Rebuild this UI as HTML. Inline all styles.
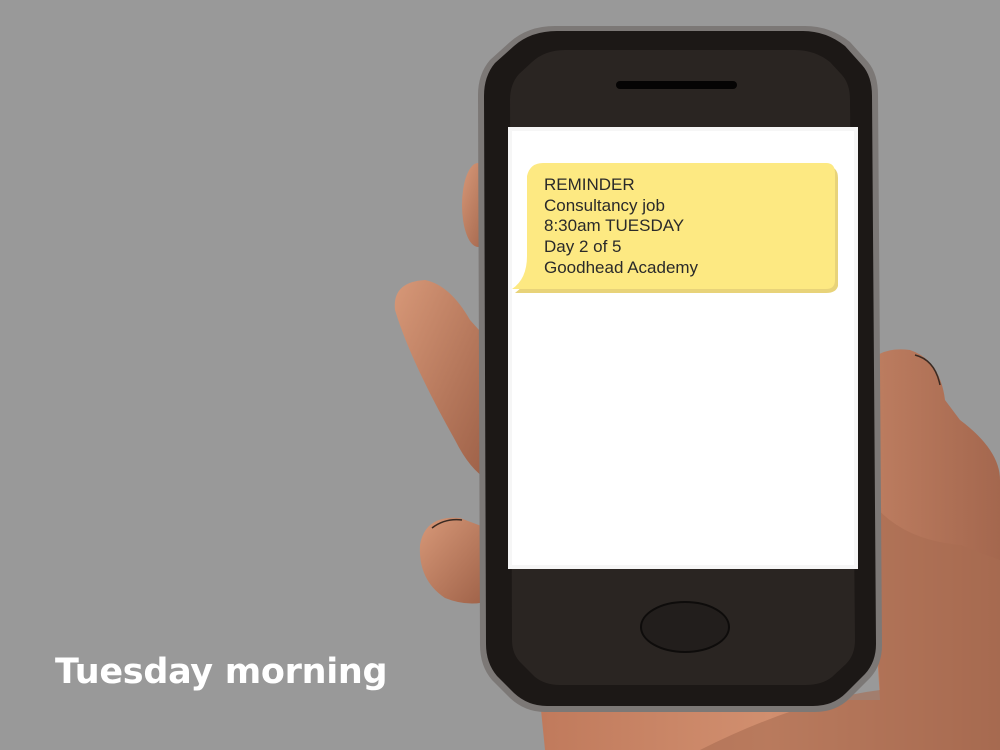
<!DOCTYPE html>
<html><head><style>
html,body{margin:0;padding:0;background:#999;}
body{width:1000px;height:750px;overflow:hidden;position:relative;}
svg{position:absolute;left:0;top:0;}
.cap{position:absolute;left:55px;top:652px;font:bold 35px "DejaVu Sans","Liberation Sans",sans-serif;color:#fff;letter-spacing:-0.3px;}
.msg{position:absolute;left:544px;top:175px;font:17px/20.7px "Liberation Sans",sans-serif;color:#2a2a2a;}
</style></head><body>
<svg width="1000" height="750" viewBox="0 0 1000 750">
<defs>
<linearGradient id="sk" x1="0" y1="0" x2="1" y2="1"><stop offset="0" stop-color="#d79878"/><stop offset="1" stop-color="#9c5f46"/></linearGradient>
<linearGradient id="sk2" x1="0" y1="0" x2="1" y2="0"><stop offset="0" stop-color="#c07a5c"/><stop offset="0.5" stop-color="#d18f6f"/><stop offset="1" stop-color="#a4674e"/></linearGradient>
</defs>
<rect width="1000" height="750" fill="#999"/>
<path d="M860 380 Q870 345 910 350 Q940 360 945 400 L960 420 Q1000 450 1000 480 L1000 750 L545 750 L540 700 L880 700 Z" fill="url(#sk2)"/>
<path d="M870 500 Q900 540 960 545 L1000 560 L1000 750 L700 750 Q800 700 880 690 Z" fill="#a96c52" opacity="0.6"/>
<ellipse cx="478" cy="205" rx="16" ry="42" fill="url(#sk)"/>
<path d="M395 310 Q392 282 425 280 Q450 285 470 320 L488 340 L488 480 Q470 470 455 440 Q410 360 395 310 Z" fill="url(#sk)"/>
<path d="M420 545 Q425 515 460 518 L492 530 L492 600 Q470 608 445 598 Q418 580 420 545 Z" fill="url(#sk)"/>
<path d="M432 528 Q445 518 462 520" stroke="#3a2a22" stroke-width="1.5" fill="none"/>
<path d="M915 355 Q935 360 940 385" stroke="#3a2a22" stroke-width="1.5" fill="none"/>
<!-- phone body, chamfered -->
<path d="M555 26 L805 26 Q830 26 850 42 L868 62 Q878 74 878 95 L882 645 Q882 665 870 678 L850 698 Q836 712 815 712 L545 712 Q525 712 510 698 L492 680 Q480 666 480 645 L478 95 Q478 74 490 60 L510 42 Q528 26 555 26 Z" fill="#7c7876"/>
<path d="M557 31 L803 31 Q826 31 845 46 L862 65 Q872 76 872 96 L876 644 Q876 662 865 674 L846 693 Q833 706 813 706 L547 706 Q528 706 514 693 L497 676 Q486 663 486 644 L484 96 Q484 76 495 63 L514 46 Q531 31 557 31 Z" fill="#1c1816"/>
<path d="M565 50 L795 50 Q815 50 830 62 L842 75 Q850 84 850 100 L855 640 Q855 655 846 664 L832 677 Q822 685 805 685 L560 685 Q545 685 535 677 L522 664 Q512 655 512 640 L510 100 Q510 84 519 74 L532 62 Q545 50 565 50 Z" fill="#2a2522"/>
<rect x="616" y="81" width="121" height="8" rx="4" fill="#050404"/>
<rect x="508" y="127" width="350" height="442" fill="#f6f6f6"/>
<rect x="512" y="131" width="342" height="434" fill="#fff"/>
<ellipse cx="685" cy="627" rx="44" ry="25" fill="#221e1c" stroke="#0e0c0b" stroke-width="2"/>
<path d="M540 166 L826 166 Q838 166 838 178 L838 286 Q836 293 826 293 L515 293 Q530 282 530 260 L530 178 Q532 166 540 166 Z" fill="#e5ce6a" opacity="0.9"/>
<path d="M543 163 L826 163 Q835 163 835 173 L835 280 Q835 289 826 289 L512 289 Q527 279 527 256 L527 176 Q530 163 543 163 Z" fill="#fde982"/>
</svg>
<div class="msg">REMINDER<br>Consultancy job<br>8:30am TUESDAY<br>Day 2 of 5<br>Goodhead Academy</div>
<div class="cap">Tuesday morning</div>
</body></html>
